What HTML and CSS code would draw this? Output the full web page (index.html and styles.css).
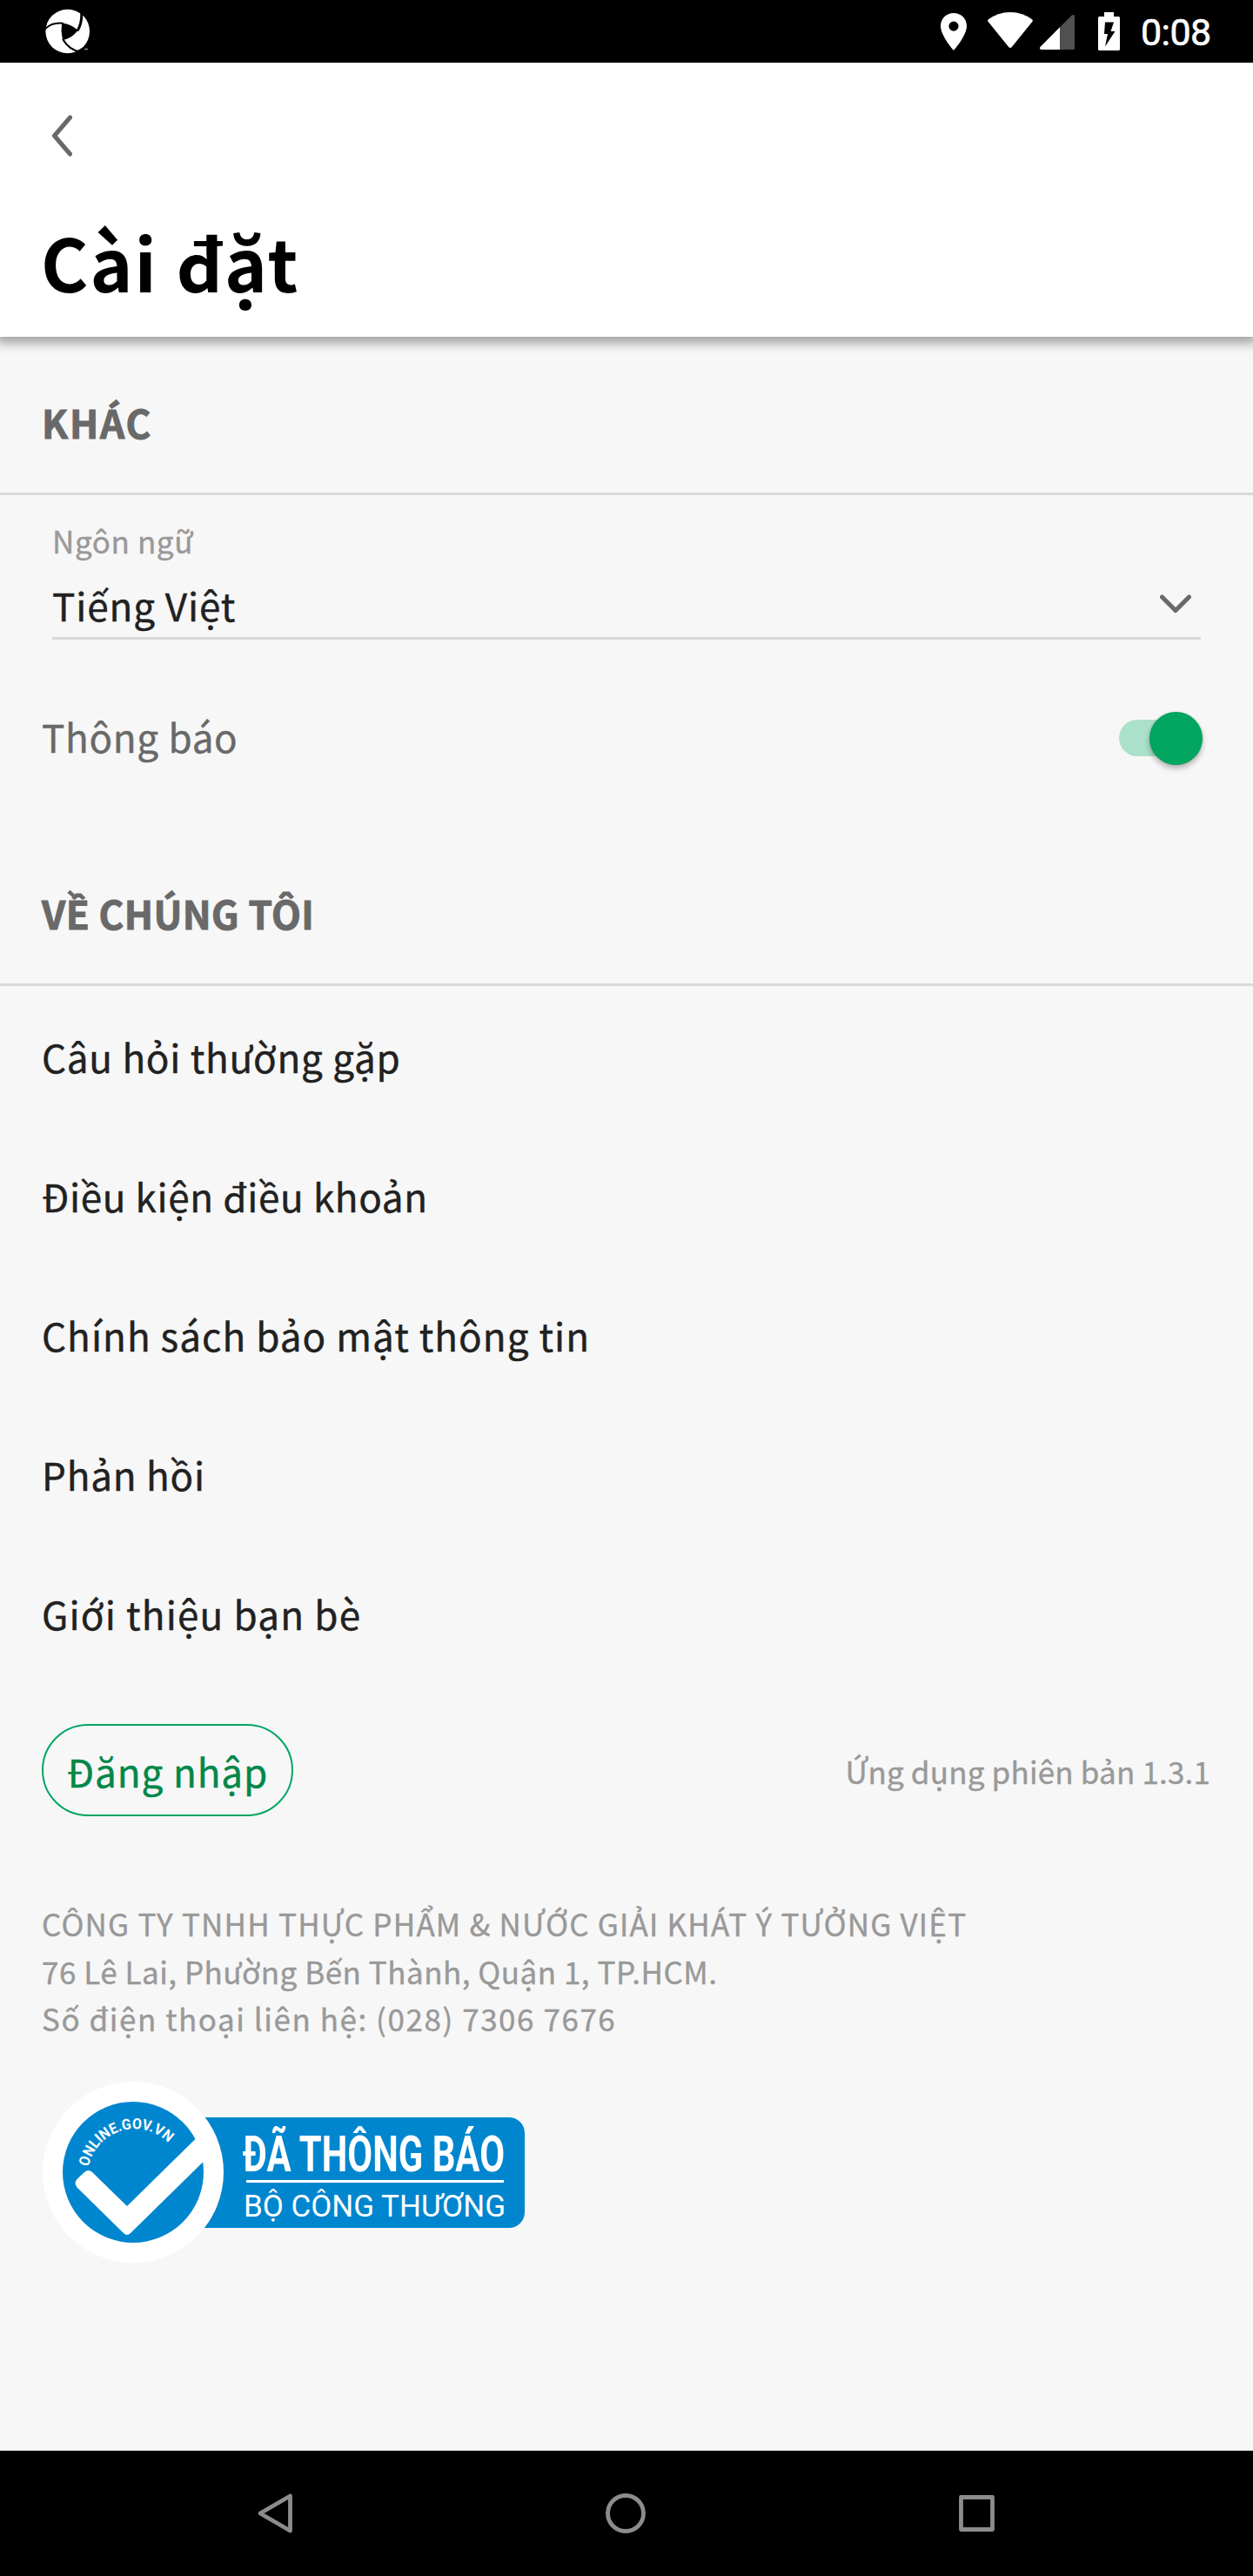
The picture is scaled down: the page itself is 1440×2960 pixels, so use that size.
FILE: index.html
```html
<!DOCTYPE html>
<html lang="vi">
<head>
<meta charset="utf-8">
<title>Cài đặt</title>
<link rel="stylesheet" href="styles.css">
</head>
<body>
<div class="screen">
  <div class="status-bar">
    <svg class="app-logo" width="52" height="52" viewBox="0 0 52 52">
      <circle cx="25.7" cy="26" r="25.3" fill="#fff"/>
      <g fill="none" stroke="#000" stroke-linecap="round">
        <path d="M19.5 17Q29.500 18 37 25Q30.500 33.500 20.500 35.500Q18 26 19.500 17Z" fill="#000" stroke-width="1"/>
        <path d="M0 23Q8 15.500 20 16.800" stroke-width="2"/>
        <path d="M41.500 0Q43 15 37.500 24.500" stroke-width="3"/>
        <path d="M20.500 35.500Q27 47 40 49.500" stroke-width="2.200"/>
      </g>
      <path d="M37 48L46 43L50 51L38 52Z" fill="#000"/>
      <path d="M45 46.500H49" stroke="#888" stroke-width="1.500"/>
    </svg>
    <div class="status-icons">
      <svg class="pin" width="30" height="43" viewBox="0 0 30 43"><path fill="#fff" fill-rule="evenodd" d="M15 0C6.500 0 0 6.500 0 15C0 26 15 43 15 43S30 26 30 15C30 6.500 23.500 0 15 0ZM15 9.500A5.600 5.600 0 1 1 15 20.700A5.600 5.600 0 1 1 15 9.500Z"/></svg>
      <svg class="wifi" width="52" height="42" viewBox="0 0 52 42"><path fill="#fff" d="M.6 8.600Q11.500 0 26 0T51.400 8.600Q52.200 9.700 51.300 11L27.800 40Q26 42 24.200 40L.7 11Q-.2 9.700 .6 8.600Z"/></svg>
      <svg class="signal" width="40" height="40" viewBox="0 0 40 40"><path fill="#505050" d="M23 14.200L36.500 .7Q38 -.5 40 .7V38.500Q40 40 38.500 40H23Z"/><path fill="#fff" d="M23 14.200V40H1.500Q-.8 39.500 .4 37Z"/></svg>
      <svg class="battery" width="25" height="44" viewBox="0 0 25 44"><path fill="#fff" d="M7 0H18V5H23.500Q25 5 25 6.500V42.500Q25 44 23.500 44H1.500Q0 44 0 42.500V6.500Q0 5 1.500 5H7Z"/><path d="M8 11.500H18L14.500 22H19.500L8 39.500L11 25H7Z"/></svg>
      <span class="clock">0:08</span>
    </div>
  </div>

  <header class="header">
    <svg class="back" width="24" height="50" viewBox="0 0 24 50"><path d="M21.500 4L3.500 25L21.500 46"/></svg>
    <h1 class="title">Cài đặt</h1>
  </header>

  <main class="content">
    <h2 class="section-title section-other">KHÁC</h2>
    <div class="field">
      <div class="field-label">Ngôn ngữ</div>
      <div class="field-row">
        <span class="field-value">Tiếng Việt</span>
        <svg class="chevron" width="36" height="22" viewBox="0 0 36 22"><path d="M2.500 3L18 18.500L33.500 3"/></svg>
      </div>
    </div>
    <div class="toggle-row">
      <span class="toggle-label">Thông báo</span>
      <span class="switch"><span class="thumb"></span></span>
    </div>

    <h2 class="section-title section-about">VỀ CHÚNG TÔI</h2>
    <nav class="links">
      <a class="link faq">Câu hỏi thường gặp</a>
      <a class="link terms">Điều kiện điều khoản</a>
      <a class="link privacy">Chính sách bảo mật thông tin</a>
      <a class="link feedback">Phản hồi</a>
      <a class="link invite">Giới thiệu bạn bè</a>
    </nav>

    <div class="account">
      <button class="login">Đăng nhập</button>
      <span class="version">Ứng dụng phiên bản 1.3.1</span>
    </div>

    <div class="company">
      <div class="company-name">CÔNG TY TNHH THỰC PHẨM &amp; NƯỚC GIẢI KHÁT Ý TƯỞNG VIỆT</div>
      <div class="company-address">76 Lê Lai, Phường Bến Thành, Quận 1, TP.HCM.</div>
      <div class="company-phone">Số điện thoại liên hệ: (028) 7306 7676</div>
    </div>

    <svg class="badge" width="560" height="210" viewBox="0 0 560 210">
      <rect x="140" y="42" width="415" height="127" rx="18" fill="#0086cf"/>
      <circle cx="105" cy="105" r="104" fill="#fff"/>
      <circle cx="105" cy="105" r="81" fill="#0086cf"/>
      <path fill="#fff" d="M49 105Q53.500 101 58 105L98 144L176.400 67L196 62L200 79L184.800 93.700L102 175Q98 179 94 175L41 123Q36 117.500 41 112.500Z"/>
      <path id="arc" fill="none" d="M53.900 99A54 54 0 0 1 147 73"/>
      <text class="badge-arc"><textPath href="#arc" textLength="117" lengthAdjust="spacingAndGlyphs">ONLINE.GOV.VN</textPath></text>
      <text class="badge-title" x="231" y="103.500" textLength="301" lengthAdjust="spacingAndGlyphs">ĐÃ THÔNG BÁO</text>
      <rect x="235" y="114" width="296" height="3" fill="#fff"/>
      <text class="badge-sub" x="232" y="156" textLength="301" lengthAdjust="spacingAndGlyphs">BỘ CÔNG THƯƠNG</text>
    </svg>
  </main>

  <div class="nav-bar">
    <svg width="42" height="48" viewBox="0 0 42 48"><path d="M38.500 4V44L4 24Z"/></svg>
    <svg width="48" height="48" viewBox="0 0 48 48"><circle cx="24" cy="24" r="20.500"/></svg>
    <svg width="42" height="48" viewBox="0 0 42 48"><rect x="3.500" y="5.500" width="36" height="37"/></svg>
  </div>
</div>
</body>
</html>
```
FILE: styles.css
```css
* { box-sizing: border-box; }
body {
  margin: 0;
  background: #f7f7f7;
  font-family: "Noto Sans CJK SC", "Noto Sans", sans-serif;
  color: #212121;
}
svg { display: block; }
h1, h2 { margin: 0; }

.screen {
  display: flex;
  flex-direction: column;
  width: 1440px;
  height: 2960px;
  overflow: hidden;
}

.status-bar {
  display: flex;
  flex: none;
  justify-content: space-between;
  height: 72px;
  background: #000;
  padding: 10px 48px 0 52px;
}
.status-icons { display: flex; align-items: flex-start; }
.pin { margin-top: 5px; }
.wifi { margin: 4px 0 0 24px; }
.signal { margin: 7px 0 0 8px; }
.battery { margin: 4px 0 0 27px; }
.clock {
  width: 81px;
  margin: 5px 0 0 24px;
  color: #fff;
  font: 400 43px/44px Roboto, sans-serif;
  letter-spacing: -0.6px;
  -webkit-text-stroke: 0.6px;
}

.header {
  flex: none;
  height: 315px;
  padding: 59px 48px 0;
  background: #fff;
  box-shadow: 0 3px 12px 4px rgba(0, 0, 0, 0.36);
}
.back { margin-left: 11px; }
.back path, .chevron path {
  fill: none;
  stroke: #696969;
  stroke-width: 5;
  stroke-linecap: round;
  stroke-linejoin: round;
}
.title {
  margin: 77px 0 0 -1px;
  font-size: 83px;
  line-height: 84px;
  font-weight: 700;
  letter-spacing: 2px;
  color: #000;
}

.content { flex: 1; -webkit-text-stroke: 0.4px; }
.section-title {
  height: 182px;
  padding: 76px 48px 0;
  border-bottom: 3px solid #d9d9d9;
  font-size: 44px;
  line-height: 44px;
  font-weight: 700;
  color: #696969;
  -webkit-text-stroke: 1px;
}
.section-other { letter-spacing: 1.8px; }
.section-about { letter-spacing: 0.4px; }

.field {
  margin: 34px 60px 0;
  border-bottom: 3px solid #d9d9d9;
}
.field-label {
  font-size: 35px;
  line-height: 36px;
  letter-spacing: 0.6px;
  color: #999;
}
.field-row {
  display: flex;
  justify-content: space-between;
  align-items: flex-start;
  height: 59px;
  margin-top: 34px;
  padding-right: 11px;
}
.field-value {
  font-size: 44px;
  line-height: 44px;
  letter-spacing: 0.9px;
}
.chevron { margin-top: 10px; }

.toggle-row {
  display: flex;
  justify-content: space-between;
  align-items: center;
  height: 60px;
  margin: 82px 58px 74px 48px;
}
.toggle-label {
  padding-bottom: 2px;
  font-size: 44px;
  line-height: 44px;
  letter-spacing: 0.7px;
  color: #696969;
}
.switch {
  display: flex;
  justify-content: flex-end;
  align-items: center;
  width: 96px;
  height: 42px;
  margin-top: 2px;
  border-radius: 21px;
  background: #abe0ca;
}
.thumb {
  width: 61px;
  height: 61px;
  flex: none;
  border-radius: 50%;
  background: #02a55f;
  box-shadow: 0 4px 6px rgba(0, 0, 0, 0.28), 0 0 2px rgba(0, 0, 0, 0.15);
}

.links {
  display: flex;
  flex-direction: column;
  padding: 1px 48px 0;
}
.link {
  height: 160px;
  font-size: 44px;
  line-height: 160px;
}
.faq { letter-spacing: 0.75px; }
.terms { letter-spacing: 0.65px; }
.privacy { letter-spacing: 1.05px; }
.feedback { letter-spacing: 0.8px; }
.invite { letter-spacing: 1.2px; }

.account {
  display: flex;
  justify-content: space-between;
  align-items: center;
  height: 106px;
  margin: 47px 49px 0 48px;
}
.login {
  width: 289px;
  height: 106px;
  padding: 2px 0 0;
  border: 2px solid #02a562;
  border-radius: 53px;
  background: none;
  color: #008748;
  font: 400 44px/44px "Noto Sans CJK SC", "Noto Sans", sans-serif;
  letter-spacing: 0.9px;
  -webkit-text-stroke: 0.4px;
}
.version {
  padding-top: 2px;
  font-size: 35px;
  line-height: 36px;
  letter-spacing: 0.17px;
  color: #999;
}

.company {
  margin: 96px 47px 0 48px;
  font-size: 35px;
  line-height: 54.600px;
  color: #999;
}
.company-name { letter-spacing: 1.2px; }
.company-address { letter-spacing: 0.5px; }
.company-phone { letter-spacing: 1.55px; }

.badge { margin: 44px 0 0 48px; -webkit-text-stroke: 0; }
.badge text { fill: #fff; font-family: Roboto, sans-serif; }
.badge-arc { font-size: 17px; font-weight: 700; }
.badge .badge-title { font-size: 58px; font-weight: 700; }
.badge .badge-sub { font-size: 35px; font-weight: 400; }

.nav-bar {
  display: flex;
  flex: none;
  justify-content: space-between;
  align-items: center;
  height: 144px;
  padding: 0 297px 0 295px;
  background: #000;
}
.nav-bar svg {
  fill: none;
  stroke: #8c8c8c;
  stroke-width: 4.800;
  stroke-linejoin: round;
}
```
